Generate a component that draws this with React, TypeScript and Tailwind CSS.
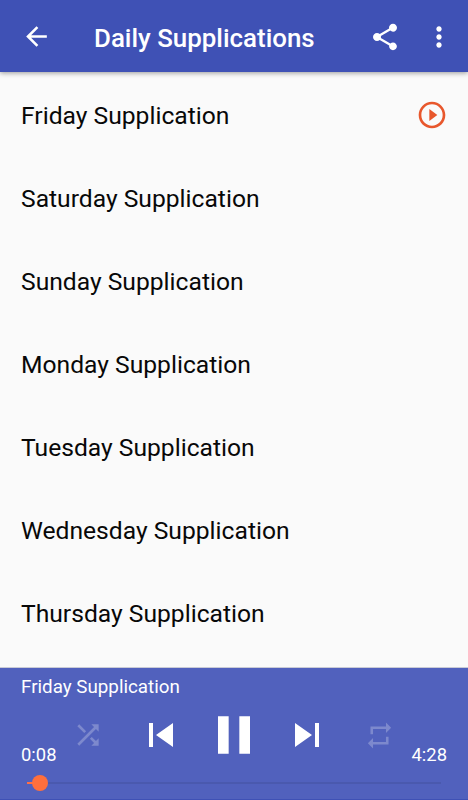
import {
  MdArrowBack,
  MdMoreVert,
  MdPause,
  MdPlayCircleOutline,
  MdRepeat,
  MdShare,
  MdShuffle,
  MdSkipNext,
  MdSkipPrevious,
} from 'react-icons/md';

const supplications = [
  'Friday Supplication',
  'Saturday Supplication',
  'Sunday Supplication',
  'Monday Supplication',
  'Tuesday Supplication',
  'Wednesday Supplication',
  'Thursday Supplication',
];

interface PlayerProps {
  title: string;
  elapsed: number;
  duration: number;
}

function formatTime(seconds: number) {
  return `${Math.floor(seconds / 60)}:${String(Math.floor(seconds % 60)).padStart(2, '0')}`;
}

function Header() {
  return (
    <header className="z-10 flex h-[72px] shrink-0 items-center bg-[#3f51b5] pt-px pr-[13px] pl-[21px] text-white shadow-[0_1px_5px_rgba(0,0,0,0.4)]">
      <button aria-label="Back">
        <MdArrowBack className="size-[31px]" />
      </button>
      <h1 className="mt-[3px] ml-[42px] flex-1 text-[25.9px] font-medium whitespace-nowrap">Daily Supplications</h1>
      <button aria-label="Share">
        <MdShare className="size-8" />
      </button>
      <button aria-label="More" className="ml-[22px]">
        <MdMoreVert className="size-8" />
      </button>
    </header>
  );
}

function Player({ title, elapsed, duration }: PlayerProps) {
  const progress = (elapsed / duration) * 100;

  return (
    <footer className="flex h-[132px] shrink-0 flex-col border-b border-[#3f51b5] bg-[#5161bd] px-[21px] pt-[7px] text-white shadow-[0_-1px_0_#c9cbd6]">
      <p className="text-[18.8px] leading-[25px]">{title}</p>

      {/* Controls */}
      <div className="flex h-[70px] items-center">
        <span className="mb-[3px] w-[31px] self-end text-[18.4px] leading-[24px] whitespace-nowrap">
          {formatTime(elapsed)}
        </span>
        <div className="grid flex-1 grid-cols-5 place-items-center">
          <button aria-label="Shuffle">
            <MdShuffle className="size-8 opacity-25" />
          </button>
          <button aria-label="Previous">
            <MdSkipPrevious className="size-12" />
          </button>
          <button aria-label="Pause">
            <MdPause className="size-16" />
          </button>
          <button aria-label="Next">
            <MdSkipNext className="size-12" />
          </button>
          <button aria-label="Repeat">
            <MdRepeat className="size-[31px] opacity-25" />
          </button>
        </div>
        <span className="mb-[3px] flex w-[31px] justify-end self-end text-[18.4px] leading-[24px] whitespace-nowrap">
          {formatTime(duration)}
        </span>
      </div>

      {/* Seek bar */}
      <div className="mx-[6px] mt-[5px] flex h-4 items-center">
        <div className="h-[2px] bg-[#ff6f43]" style={{ width: `${progress}%` }} />
        <div className="z-10 -mx-2 size-4 shrink-0 rounded-full bg-[#ff6f3c]" />
        <div className="h-[2px] flex-1 bg-[#4a59ae]" />
      </div>
    </footer>
  );
}

export default function App() {
  return (
    <div className="flex h-[800px] w-[468px] flex-col overflow-hidden bg-[#fafafa] font-[Roboto,sans-serif]">
      <Header />
      <ul className="flex-1 pt-[3px]">
        {supplications.map((name, index) => (
          <li key={name} className="flex h-[83px] items-center justify-between pr-[20.5px] pl-[21px] text-[24.65px] text-[#080808]">
            <span>{name}</span>
            {index === 0 && <MdPlayCircleOutline className="mb-[4px] size-8 text-[#e8572c]" />}
          </li>
        ))}
      </ul>
      <Player title={supplications[0]} elapsed={8.6} duration={268} />
    </div>
  );
}
